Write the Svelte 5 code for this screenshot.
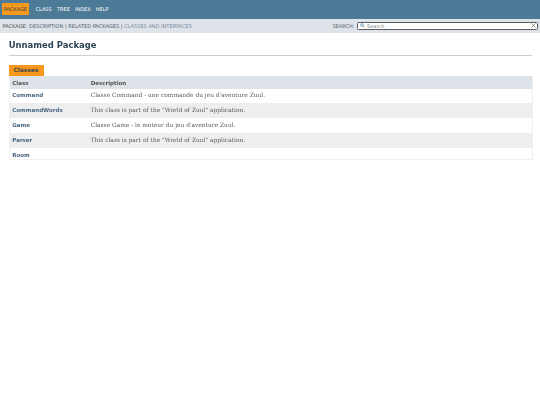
<script>
  const rows = [
    ['Command', "Classe Command - une commande du jeu d'aventure Zuul."],
    ['CommandWords', 'This class is part of the "World of Zuul" application.'],
    ['Game', "Classe Game - le moteur du jeu d'aventure Zuul."],
    ['Parser', 'This class is part of the "World of Zuul" application.'],
    ['Room', '']
  ];
  const nav = ['Class', 'Tree', 'Index', 'Help'];
</script>

<div class="page">
  <header>
    <nav class="top">
      <span class="active">PACKAGE</span>
      {#each nav as item}<a href="#top">{item.toUpperCase()}</a>{/each}
    </nav>
    <div class="sub">
      <div class="crumbs">
        PACKAGE: <a href="#top">DESCRIPTION</a> | <a href="#top">RELATED PACKAGES</a> | <a class="dim" href="#top">CLASSES AND INTERFACES</a>
      </div>
      <div class="search">
        <label for="s">SEARCH:</label>
        <div class="box">
          <svg class="glass" viewBox="0 0 10 10" width="5" height="5">
            <circle cx="4" cy="4" r="2.8" fill="#cfe3f2" stroke="#5a8fb5" stroke-width="1.2" />
            <path d="M6 6l3.2 3.2" stroke="#8a9aa5" stroke-width="1.6" />
          </svg>
          <input id="s" placeholder="Search" />
          <svg class="clear" viewBox="0 0 10 10" width="5" height="5">
            <path d="M1 1l8 8M9 1l-8 8" stroke="#666" stroke-width="1.4" />
          </svg>
        </div>
      </div>
    </div>
  </header>

  <main>
    <h1>Unnamed Package</h1>
    <div class="caption">Classes</div>
    <div class="table">
      <div class="row head"><div class="c1">Class</div><div class="c2">Description</div></div>
      {#each rows as [name, desc], i}
        <div class="row" class:alt={i % 2 === 1} class:first={i === 0} class:last={i === rows.length - 1}>
          <div class="c1"><a href="#top">{name}</a></div>
          <div class="c2">{desc}</div>
        </div>
      {/each}
    </div>
  </main>
</div>

<style>
  :global(body) { margin: 0; background: #fff; }
  .page { font-family: "DejaVu Sans", sans-serif; color: #353833; width: 540px; filter: blur(0.4px); }
  a { text-decoration: none; }
  .top { height: 18.5px; background: #4d7a97; display: flex; align-items: center; padding-left: 1.5px; font-size: 5.05px; box-sizing: border-box; }
  .top a { color: #fff; margin-right: 5.1px; }
  .active { background: #f8981d; color: #3a4650; padding: 3.2px 2.2px; margin-right: 6.3px; }
  .sub { height: 14px; background: #dee3e9; display: flex; justify-content: space-between; align-items: center; padding: 0 2.5px; font-size: 5.05px; box-sizing: border-box; color: #50534f; }
  .sub a { color: #50606e; }
  .sub a.dim { color: #76899b; }
  .crumbs { white-space: pre-wrap; }
  .search { display: flex; align-items: center; gap: 2.5px; color: #5a6570; }
  .box { width: 180.5px; height: 8px; border: 1px solid #5c5c5c; border-radius: 1.5px; background: #fff; display: flex; align-items: center; padding: 0 1px 0 2px; box-sizing: border-box; gap: 2px; }
  input { flex: 1; min-width: 0; border: 0; padding: 0; margin: 0; outline: 0; font: 5.05px "DejaVu Sans", sans-serif; background: transparent; height: 5.5px; }
  input::placeholder { color: #777; opacity: 1; }
  main { padding: 0 8px 0 8.7px; }
  h1 { margin: 0; padding: 7.5px 0 4.5px; font-size: 8.45px; line-height: 10px; font-weight: bold; color: #2c4557; border-bottom: 1px solid #cfcfcf; }
  .caption { width: fit-content; margin-top: 9px; background: #f8981d; color: #3a4650; font-size: 5.9px; font-weight: bold; padding: 2.5px 5.1px 0; height: 11.5px; box-sizing: border-box; line-height: 7px; }
  .table { box-sizing: border-box; width: 524px; border-bottom: 1px solid #f0f0f0; border-left: 1px solid #f0f0f0; border-right: 1px solid #f0f0f0; }
  .row { display: grid; grid-template-columns: 81px 1fr; height: 15px; align-items: start; padding-top: 4px; box-sizing: border-box; }
  .row.head { height: 12.7px; padding-top: 4px; background: #dee3e9; color: #50534f; }
  .row.first { height: 14.3px; padding-top: 3.3px; }
  .row.last { height: 11px; }
  .row.alt { background: #eeeeef; }
  .c1 { padding-left: 2.6px; font-size: 5.5px; line-height: 7px; font-weight: bold; }
  .c1 a { color: #4a6782; }
  .c2 { font-size: 5.5px; line-height: 7px; font-weight: bold; }
  .row:not(.head) .c2 { font-family: "DejaVu Serif", serif; color: #5c5c5c; font-size: 5.9px; font-weight: normal; padding-top: 0.3px; }
</style>
